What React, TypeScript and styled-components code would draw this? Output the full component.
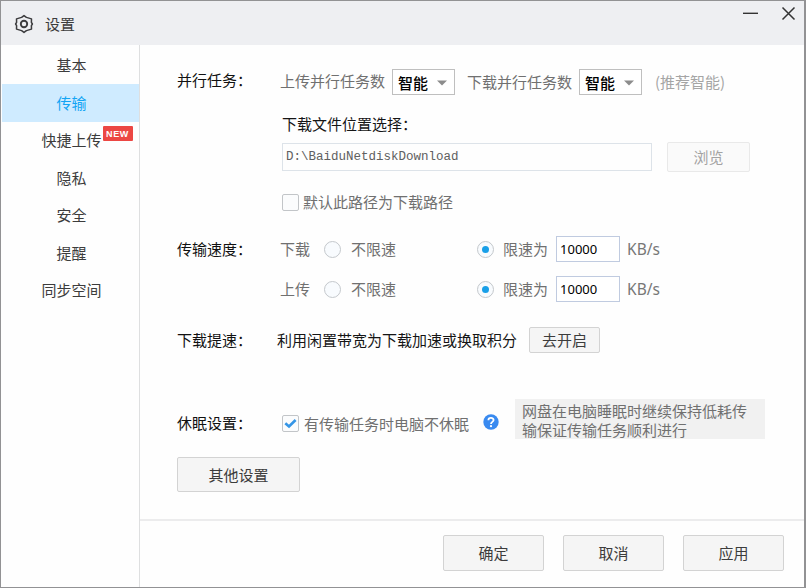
import React from "react";
import styled, { createGlobalStyle, css } from "styled-components";

const GlobalStyle = createGlobalStyle`
  * { box-sizing: border-box; }
  body {
    margin: 0;
    font-family: "Noto Sans CJK SC", sans-serif;
    font-size: 15px;
    line-height: 20px;
    color: #3c3c3c;
  }
`;

const Window = styled.div`
  width: 806px;
  height: 588px;
  display: flex;
  flex-direction: column;
  background: #fefefe;
  border: 1px solid #929294;
  border-right-width: 2px;
  overflow: hidden;
  white-space: nowrap;
`;

const TitleBar = styled.header`
  display: flex;
  flex: none;
  height: 44px;
  padding: 0 7px 0 13px;
  background: #eeeff2;
`;

const TitleIcon = styled.svg`
  width: 20px;
  height: 20px;
  margin-top: 13px;
`;

const Title = styled.h1`
  flex: 1;
  margin: 13px 0 0 11px;
  font-size: 15px;
  font-weight: 400;
  line-height: 20px;
`;

const WindowControls = styled.div`
  display: flex;
  gap: 23px;
  padding-top: 4px;
`;

const ControlIcon = styled.svg`
  width: 16px;
  height: 16px;
`;

const Body = styled.div`
  display: flex;
  flex: 1;
  min-height: 0;
`;

const Sidebar = styled.nav`
  width: 139px;
  flex: none;
  padding: 1.5px 0 0 1px;
  border-right: 1px solid #dedfe0;
`;

const NavItem = styled.div<{ $active?: boolean }>`
  display: flex;
  align-items: center;
  justify-content: center;
  height: 37.5px;
  padding-left: 2px;
  ${(p) => p.$active && css`
    background: #cfebff;
    color: #12a5f4;
  `}
`;

const NavLabel = styled.span`
  position: relative;
`;

const NewBadge = styled.span`
  position: absolute;
  left: 100%;
  top: -4px;
  width: 30px;
  height: 15px;
  margin-left: 1px;
  border-radius: 1px;
  background: #ec4743;
  color: #fff;
  font: 700 9px/16px "Liberation Sans", sans-serif;
  letter-spacing: 0.6px;
  text-align: center;
`;

const Main = styled.main`
  display: flex;
  flex: 1;
  flex-direction: column;
`;

const Settings = styled.div`
  display: flex;
  flex-direction: column;
  align-items: flex-start;
  height: 476px;
  padding: 24px 0 0 37px;
  border-bottom: 2px solid #ececed;
`;

const Row = styled.section<{ $top?: number; $height?: number }>`
  display: grid;
  grid-template-columns: 100px auto;
  align-items: center;
  height: ${(p) => p.$height ?? 25}px;
  margin-top: ${(p) => p.$top ?? 0}px;
`;

const RowLabel = styled.h2<{ $lift?: number; $drop?: number }>`
  margin: 0;
  padding: ${(p) => p.$drop ?? 0}px 0 ${(p) => p.$lift ?? 0}px;
  color: #111;
  font-size: 15px;
  font-weight: 400;
  line-height: 20px;
`;

const Controls = styled.div<{ $indent?: number }>`
  display: flex;
  align-items: center;
  padding-left: ${(p) => p.$indent ?? 3}px;
`;

const Text = styled.span<{ $tone?: "dark" | "muted"; $left?: number; $lift?: number; $drop?: number }>`
  margin-left: ${(p) => p.$left ?? 0}px;
  padding-top: ${(p) => p.$drop ?? 0}px;
  padding-bottom: ${(p) => p.$lift ?? 0}px;
  color: ${(p) => (p.$tone === "dark" ? "#151515" : p.$tone === "muted" ? "#a5a5a5" : "#707070")};
`;

const Select = styled.div`
  display: flex;
  align-items: center;
  justify-content: space-between;
  width: 63px;
  height: 26px;
  margin-left: 7px;
  padding: 1px 7px 0 5px;
  border: 1px solid #bfbfbf;
  background: #fff;
  color: #000;
  font-weight: 500;
`;

const Arrow = styled.svg`
  width: 10px;
  height: 6px;
`;

const PathGroup = styled.section`
  display: flex;
  flex-direction: column;
  margin: 20px 0 0 105px;
`;

const PathLine = styled.div`
  display: flex;
  align-items: center;
  height: 30px;
  margin-top: 8px;
`;

const PathInput = styled.div`
  width: 370px;
  height: 28px;
  padding: 0 0 0 3px;
  border: 1px solid #dde3e9;
  color: #606060;
  font: 12.5px/27px "Liberation Mono", monospace;
`;

const Button = styled.button<{ $w: number; $h: number; $left?: number; $top?: number; $disabled?: boolean }>`
  flex: none;
  width: ${(p) => p.$w}px;
  height: ${(p) => p.$h}px;
  margin: ${(p) => p.$top ?? 0}px 0 0 ${(p) => p.$left ?? 0}px;
  padding: 0;
  border: 1px solid ${(p) => (p.$disabled ? "#e9e9e9" : "#d3d3d3")};
  border-radius: 2px;
  background: ${(p) => (p.$disabled ? "#fafafa" : "#f5f5f5")};
  color: ${(p) => (p.$disabled ? "#a3a3a3" : "#3c3c3c")};
  font: inherit;
`;

const CheckLine = styled.label`
  display: flex;
  align-items: center;
  height: 20px;
  margin-top: 20px;
`;

const CheckBox = styled.span<{ $top?: number }>`
  display: flex;
  flex: none;
  width: 17px;
  height: 17px;
  margin-top: ${(p) => p.$top ?? 0}px;
  border: 1px solid #c2c5c8;
  border-radius: 2px;
  background: #fbfcfd;
`;

const Radio = styled.span<{ $checked?: boolean; $left: number }>`
  display: flex;
  align-items: center;
  justify-content: center;
  width: 17px;
  height: 17px;
  margin-left: ${(p) => p.$left}px;
  border: 1px solid #c4c8cc;
  border-radius: 50%;
  background: #f8fbfe;
  &::after {
    content: "";
    width: 7px;
    height: 7px;
    border-radius: 50%;
    background: ${(p) => (p.$checked ? "#189fe8" : "transparent")};
  }
`;

const SpeedInput = styled.div`
  width: 64px;
  height: 26px;
  margin-left: 8px;
  padding-left: 3px;
  border: 1px solid #c0cbe0;
  background: #fff;
  color: #000;
  font: 13px/24px "Noto Sans", sans-serif;
`;

const Unit = styled.span`
  margin-left: 7px;
  color: #777;
  font: 15.5px/20px "Noto Sans", sans-serif;
`;

const HelpIcon = styled.svg`
  width: 16px;
  height: 16px;
  margin: 6px 16px 0 14px;
`;

const Tip = styled.p`
  width: 250px;
  height: 40px;
  margin: 0;
  padding: 3px 7px 0;
  background: #f1f1f1;
  color: #707070;
  line-height: 18.5px;
`;

const Footer = styled.footer`
  display: flex;
  justify-content: flex-end;
  gap: 19px;
  padding: 14px 20px 0 0;
`;

const NAV = ["基本", "传输", "快捷上传", "隐私", "安全", "提醒", "同步空间"];

const Dropdown = () => (
  <Select>
    智能
    <Arrow viewBox="0 0 10 6"><path d="M0 0.5h10L5 5.5z" fill="#8c8c8c" /></Arrow>
  </Select>
);

const SpeedControls = ({ name }: { name: string }) => (
  <Controls>
    <Text>{name}</Text>
    <Radio $left={14} />
    <Text $left={10}>不限速</Text>
    <Radio $left={81} $checked />
    <Text $left={9}>限速为</Text>
    <SpeedInput>10000</SpeedInput>
    <Unit>KB/s</Unit>
  </Controls>
);

export default function App() {
  return (
    <>
      <GlobalStyle />
      <Window>
        <TitleBar>
          <TitleIcon viewBox="0 0 20 20" fill="none" stroke="#3c3c3e">
            <path d="M10 1.6 12.4 3.4 17.5 4.9 17.4 8.3 18.4 10 17.4 11.7 17.5 15.1 12.4 16.6 10 18.4 7.6 16.6 2.5 15.1 2.6 11.7 1.6 10 2.6 8.3 2.5 4.9 7.6 3.4Z" strokeWidth="1.5" strokeLinejoin="round" />
            <circle cx="10" cy="10" r="3.2" strokeWidth="1.9" />
          </TitleIcon>
          <Title>设置</Title>
          <WindowControls>
            <ControlIcon viewBox="0 0 16 16" stroke="#333" strokeWidth="1.4"><path d="M1 8.3h15" /></ControlIcon>
            <ControlIcon viewBox="0 0 16 16" stroke="#333" strokeWidth="1.5"><path d="M1.5 2.5 13.5 14.5M13.5 2.5 1.5 14.5" /></ControlIcon>
          </WindowControls>
        </TitleBar>
        <Body>
          <Sidebar>
            {NAV.map((item) => (
              <NavItem key={item} $active={item === "传输"}>
                <NavLabel>
                  {item}
                  {item === "快捷上传" && <NewBadge>NEW</NewBadge>}
                </NavLabel>
              </NavItem>
            ))}
          </Sidebar>
          <Main>
            <Settings>
              <Row>
                <RowLabel $lift={5}>并行任务：</RowLabel>
                <Controls>
                  <Text $lift={3}>上传并行任务数</Text>
                  <Dropdown />
                  <Text $left={12}>下载并行任务数</Text>
                  <Dropdown />
                  <Text $left={13} $tone="muted">(推荐智能)</Text>
                </Controls>
              </Row>
              <PathGroup>
                <Text $tone="dark">下载文件位置选择：</Text>
                <PathLine>
                  <PathInput>D:\BaiduNetdiskDownload</PathInput>
                  <Button $w={83} $h={30} $left={15} $disabled>浏览</Button>
                </PathLine>
                <CheckLine>
                  <CheckBox />
                  <Text $left={4}>默认此路径为下载路径</Text>
                </CheckLine>
              </PathGroup>
              <Row $top={24} $height={26}>
                <RowLabel>传输速度：</RowLabel>
                <SpeedControls name="下载" />
              </Row>
              <Row $top={14} $height={26}>
                <span />
                <SpeedControls name="上传" />
              </Row>
              <Row $top={25} $height={25}>
                <RowLabel>下载提速：</RowLabel>
                <Controls $indent={0}>
                  <Text $tone="dark">利用闲置带宽为下载加速或换取积分</Text>
                  <Button $w={71} $h={26} $left={12}>去开启</Button>
                </Controls>
              </Row>
              <Row $top={47} $height={40}>
                <RowLabel $drop={7}>休眠设置：</RowLabel>
                <Controls $indent={5}>
                  <CheckBox $top={9}>
                    <svg width="15" height="15" viewBox="0 0 15 15" fill="none" stroke="#3495e6" strokeWidth="2.6">
                      <path d="M2.3 7.2 6 10.5 12.6 4" />
                    </svg>
                  </CheckBox>
                  <Text $left={5} $drop={9}>有传输任务时电脑不休眠</Text>
                  <HelpIcon viewBox="0 0 16 16" fill="none">
                    <circle cx="8" cy="8" r="7.7" fill="#398af0" />
                    <path d="M5.4 6.2C5.4 3.2 10.6 3.2 10.6 6.1 10.6 8 8 7.8 8 10" stroke="#fff" strokeWidth="1.8" />
                    <circle cx="8" cy="12.2" r="1.1" fill="#fff" />
                  </HelpIcon>
                  <Tip>网盘在电脑睡眠时继续保持低耗传<br />输保证传输任务顺利进行</Tip>
                </Controls>
              </Row>
              <Button $w={123} $h={35} $top={18}>其他设置</Button>
            </Settings>
            <Footer>
              <Button $w={101} $h={36}>确定</Button>
              <Button $w={101} $h={36}>取消</Button>
              <Button $w={101} $h={36}>应用</Button>
            </Footer>
          </Main>
        </Body>
      </Window>
    </>
  );
}
